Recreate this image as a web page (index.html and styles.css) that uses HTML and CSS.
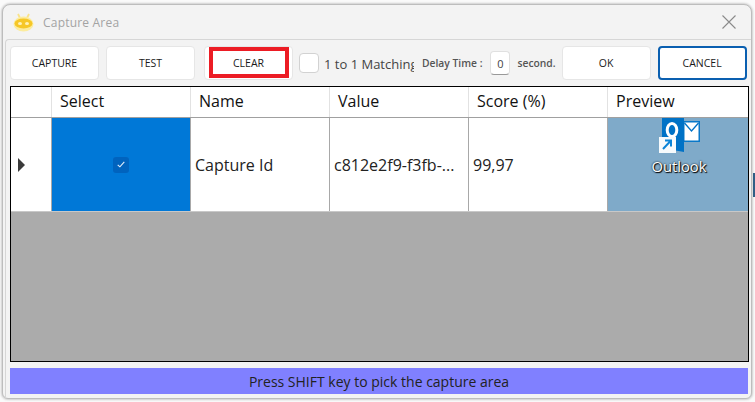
FILE: index.html
```html
<!DOCTYPE html>
<html lang="en">
<head>
<meta charset="utf-8">
<title>Capture Area</title>
<link rel="stylesheet" href="styles.css">
</head>
<body>
<div class="window">
  <header class="titlebar">
    <svg class="logo" width="21" height="19" viewBox="0 0 21 19">
      <path d="M5 1l2.500 5M16 1l-2.500 5" stroke="#f9e38a" stroke-width="1.800" fill="none"/>
      <ellipse cx="10.500" cy="11" rx="10" ry="7.500" fill="#fcec9e"/>
      <ellipse cx="10.500" cy="10.500" rx="9" ry="5" fill="#f6c727"/>
      <ellipse cx="7" cy="10.500" rx="2" ry="1.500" fill="#fff2b8"/>
      <ellipse cx="14" cy="10.500" rx="2" ry="1.500" fill="#fff2b8"/>
    </svg>
    <span class="title">Capture Area</span>
    <svg class="close" width="14" height="14" viewBox="0 0 14 14">
      <path d="M.5.5l13 13M13.500.5l-13 13" stroke="#8a8a8a" stroke-width="1.100" fill="none"/>
    </svg>
  </header>
  <main class="panel">
    <div class="toolbar">
      <button class="btn btn-capture">CAPTURE</button>
      <button class="btn btn-test">TEST</button>
      <button class="btn btn-clear"><span class="clear-mark">CLEAR</span></button>
      <span class="check-box"></span>
      <span class="match-label">1 to 1 Matching</span>
      <span class="small-label delay">Delay Time :</span>
      <span class="num-input">0</span>
      <span class="small-label second">second.</span>
      <button class="btn btn-ok">OK</button>
      <button class="btn btn-cancel">CANCEL</button>
    </div>
    <section class="grid">
      <div class="row head">
        <div class="cell c0"></div>
        <div class="cell c1">Select</div>
        <div class="cell c2">Name</div>
        <div class="cell c3">Value</div>
        <div class="cell c4">Score (%)</div>
        <div class="cell c5">Preview</div>
      </div>
      <div class="row body-row">
        <div class="cell c0 marker"><span class="arrow"></span></div>
        <div class="cell c1 selected">
          <span class="tick">
            <svg width="8" height="7" viewBox="0 0 8 7"><path d="M.7 3.800l2.200 2L7.300.8" stroke="#e6f0fb" stroke-width="1.100" fill="none"/></svg>
          </span>
        </div>
        <div class="cell c2">Capture Id</div>
        <div class="cell c3">c812e2f9-f3fb-...</div>
        <div class="cell c4">99,97</div>
        <div class="cell c5 preview">
          <svg class="outlook" width="41" height="35" viewBox="0 0 41 35">
            <path d="M3 0h22v34L3 30z" fill="#0072c6"/>
            <rect x="25" y="3" width="16" height="21" fill="#0a78c8"/>
            <path d="M25.500 4.500h14v18h-14z" fill="#fff"/>
            <path d="M25.500 5l7 8 7-8" stroke="#0072c6" stroke-width="1.300" fill="none"/>
            <ellipse cx="13" cy="12" rx="4.800" ry="6.500" fill="none" stroke="#fff" stroke-width="3"/>
            <rect x="0" y="19" width="17" height="16" fill="#f6fafc"/>
            <path d="M4 31l7.500-8M6 22.500h6v6" stroke="#0a84d8" stroke-width="2" fill="none"/>
          </svg>
          <span class="icon-label">Outlook</span>
        </div>
      </div>
      <div class="empty"></div>
    </section>
    <footer class="status">Press SHIFT key to pick the capture area</footer>
  </main>
</div>
<span class="edge-mark"></span>
</body>
</html>
```
FILE: styles.css
```css
* { box-sizing: border-box; }
html, body { margin: 0; height: 100%; }
body {
  width: 755px;
  height: 402px;
  overflow: hidden;
  background: #fafafa;
  padding: 4px 3px 3px 2px;
  font-family: "Open Sans", "Noto Sans", sans-serif;
  position: relative;
}
.window {
  height: 395px;
  background: #f3f3f3;
  border: 1px solid #bdbdbd;
  border-radius: 8px 8px 6px 6px;
  box-shadow: 0 0 2px 1px #cfcfcf;
  display: flex;
  flex-direction: column;
}
.titlebar {
  height: 34px;
  flex: none;
  display: flex;
  align-items: center;
  padding-left: 10px;
  padding-right: 15px;
}
.logo { margin-right: 9px; }
.title { font-size: 12px; color: #a3a3a3; letter-spacing: 0.2px; }
.close { margin-left: auto; }
.panel {
  flex: 1;
  display: flex;
  flex-direction: column;
  border-top: 1px solid #d6d6d6;
  border-left: 1px solid #d6d6d6;
  margin-left: 2px;
  padding: 5px 0 4px 4px;
  border-radius: 4px 0 0 0;
}
.toolbar {
  height: 35px;
  flex: none;
  display: flex;
  align-items: center;
}
.btn {
  height: 34px;
  width: 89px;
  flex: none;
  padding: 0;
  background: #fff;
  border: 1px solid #e6e6e6;
  border-radius: 4px;
  font: 10.500px "Open Sans", "Noto Sans", sans-serif;
  color: #1a1a1a;
  display: flex;
  align-items: center;
  justify-content: center;
}
.btn-test { margin-left: 7px; }
.btn-clear { margin-left: 9px; }
.clear-mark {
  width: 80px;
  height: 31px;
  border: 4px solid #ec1c24;
  display: flex;
  align-items: center;
  justify-content: center;
}
.check-box {
  width: 20px;
  height: 20px;
  margin-left: 6px;
  background: #fff;
  border: 1px solid #d2d2d2;
  border-radius: 4px;
}
.match-label {
  width: 90px;
  margin-left: 5px;
  font-size: 13px;
  color: #444;
  white-space: nowrap;
  overflow: hidden;
  padding-top: 3px;
}
.small-label { font-size: 10.300px; font-weight: 600; color: #555; white-space: nowrap; }
.delay { margin-left: 8px; }
.num-input {
  width: 20px;
  height: 24px;
  margin-left: 8px;
  background: #fff;
  border: 1px solid #e0e0e0;
  border-bottom-color: #999;
  border-radius: 4px;
  font-size: 11px;
  color: #444;
  display: flex;
  align-items: center;
  justify-content: center;
  padding-top: 2px;
}
.second { margin-left: 7px; }
.btn-ok { margin-left: 6px; }
.btn-cancel {
  margin-left: 7px;
  border: 2px solid #0a5fb0;
}
.grid {
  width: 739px;
  height: 276px;
  margin-top: 6px;
  flex: none;
  border: 1px solid #000;
  background: #fff;
  display: flex;
  flex-direction: column;
}
.row {
  display: grid;
  grid-template-columns: 41px repeat(4, 139px) 1fr;
  flex: none;
}
.head { height: 31px; border-bottom: 1px solid #a0a0a0; }
.body-row { height: 94px; border-bottom: 1px solid #c8c8c8; }
.cell {
  border-right: 1px solid #a8a8a8;
  padding-left: 4px;
  font-size: 16px;
  color: #222;
  display: flex;
  align-items: center;
}
.head .cell { border-right-color: #e2e2e2; padding-left: 8px; color: #111; padding-bottom: 2px; }
.cell.c5 { border-right: 0; }
.marker { padding-left: 7px; border-right-color: #a8a8a8; }
.arrow {
  width: 0;
  height: 0;
  border-left: 7px solid #3a3a3a;
  border-top: 7px solid transparent;
  border-bottom: 7px solid transparent;
}
.selected { background: #0078d7; justify-content: center; padding-left: 0; }
.tick {
  width: 16px;
  height: 16px;
  background: #0063be;
  border-radius: 3px;
  display: flex;
  align-items: center;
  justify-content: center;
}
.preview {
  background: #7faac9;
  padding: 0;
  flex-direction: column;
  align-items: center;
  justify-content: flex-start;
  position: relative;
}
.outlook { display: block; margin-left: 2px; }
.icon-label {
  font-size: 14.700px;
  line-height: 17px;
  color: #fff;
  margin-top: 5px;
  margin-left: 2px;
  text-shadow: 0 0 2px #000, 1px 1px 1px #000;
}
.empty { flex: 1; background: #ababab; }
.status {
  height: 26px;
  width: 738px;
  margin-top: 6px;
  flex: none;
  background: #8080ff;
  color: #222;
  font-size: 14px;
  display: flex;
  align-items: center;
  justify-content: center;
}
.edge-mark {
  position: absolute;
  left: 753px;
  top: 173px;
  width: 2px;
  height: 24px;
  background: #2f5f86;
}
```
